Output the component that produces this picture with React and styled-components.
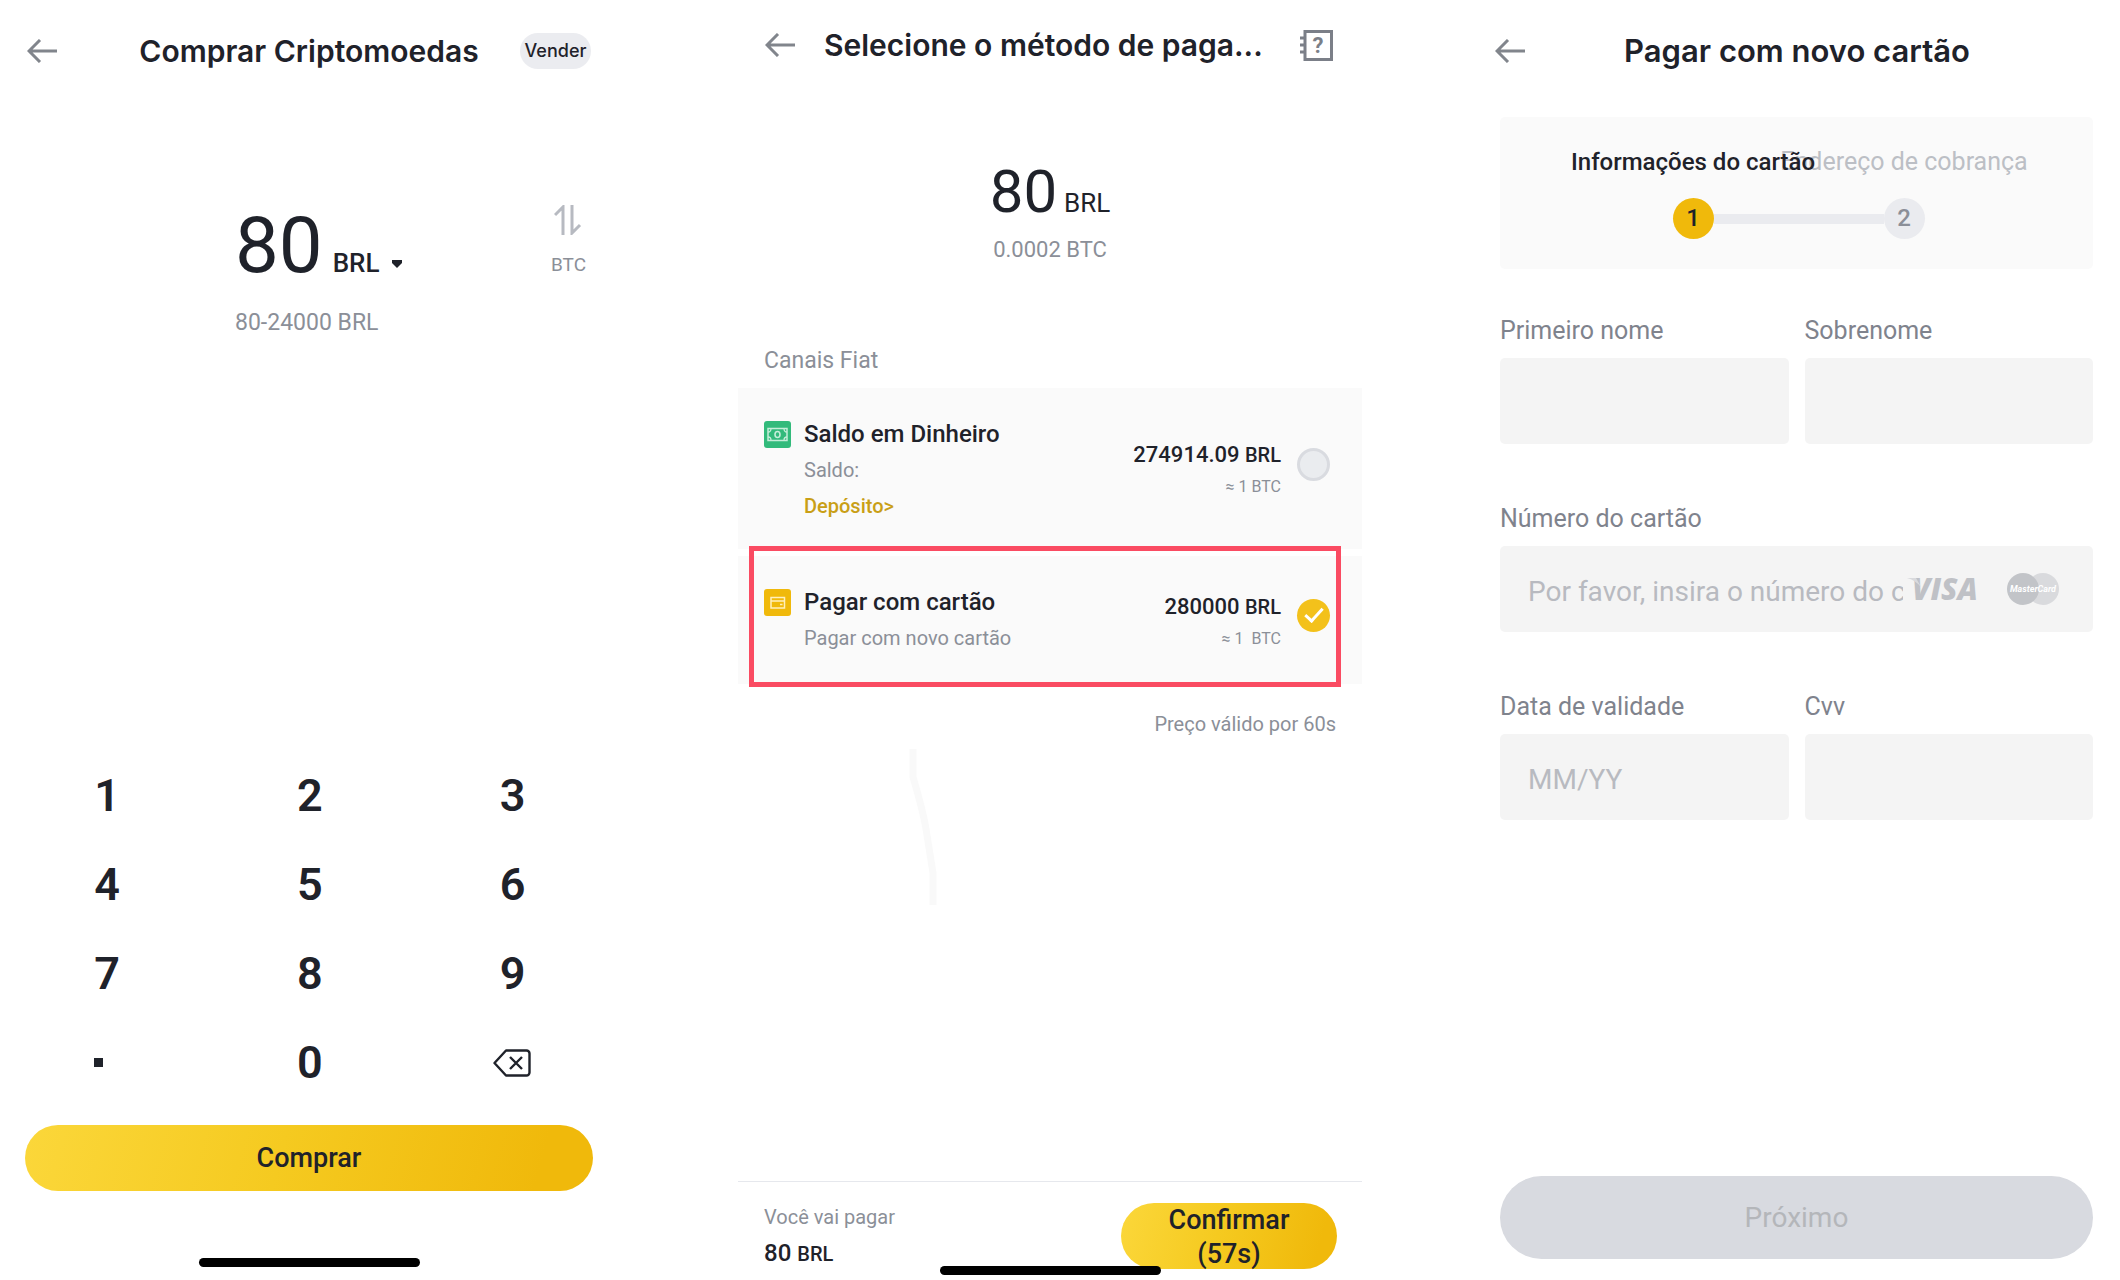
import React from 'react'
import styled, { createGlobalStyle, css } from 'styled-components'

const ink = '#1f222a'
const grey = '#8b8f98'
const gold = 'linear-gradient(105deg, #fbd73a 0%, #f5ca20 45%, #f0b90b 90%)'

const GlobalStyle = createGlobalStyle`
  *, *::before, *::after {
    box-sizing: border-box;
  }
  body {
    margin: 0;
    background: #fff;
    color: ${ink};
    font-family: Roboto, 'Open Sans', sans-serif;
  }
  button, input, select {
    border: 0;
    margin: 0;
    padding: 0;
    background: none;
    color: inherit;
    font: inherit;
  }
  button {
    cursor: pointer;
  }
  svg {
    display: block;
    flex: none;
  }
`

const Screens = styled.main`
  display: grid;
  grid-template-columns: 618fr 624fr 638fr;
  column-gap: 120px;
  min-height: 100vh;
`

const Screen = styled.section`
  position: relative;
  display: flex;
  flex-direction: column;
  min-width: 0;
`

const Header = styled.header`
  display: grid;
  grid-template-columns: 1fr auto 1fr;
  align-items: center;
  height: 101px;
  padding: 0 27px;
`

const CompactHeader = styled(Header)`
  grid-template-columns: auto 1fr auto;
  column-gap: 29px;
  height: 90px;
  padding: 0 29px 0 27px;
`

const FormHeader = styled(Header)`
  padding: 0 21px 0 13px;
`

const Title = styled.h1`
  margin: 0;
  font-family: Inter, sans-serif;
  font-size: ${({ $large }) => ($large ? 31 : 30)}px;
  font-weight: 600;
  line-height: 40px;
  white-space: nowrap;
`

const IconButton = styled.button`
  display: flex;
  justify-self: start;
`

const SellButton = styled.button`
  justify-self: end;
  width: 71px;
  height: 36px;
  border-radius: 18px;
  background: #ebecf0;
  font-family: Inter, sans-serif;
  font-size: 18px;
  font-weight: 500;
  text-align: center;
`

const Caption = styled.p`
  margin: 0;
  color: ${grey};
  font-size: ${({ $size }) => $size || 20}px;
  line-height: 28px;
`

/* buy screen */

const AmountArea = styled.div`
  display: flex;
  justify-content: space-between;
  padding: 104px 32px 0 235px;
`

const BuyAmount = styled.div`
  display: flex;
  align-items: baseline;
  gap: 10px;
  margin-bottom: 22px;
  font-size: 78px;
  line-height: 82px;
`

const CurrencyPicker = styled.label`
  display: flex;
  align-items: baseline;
  gap: 12px;
  font-size: 26px;
  font-weight: 500;
  line-height: 32px;

  select {
    appearance: none;
  }
`

const SwapButton = styled.button`
  display: flex;
  flex-direction: column;
  align-items: center;
  align-self: flex-start;
  gap: 18px;
  color: ${grey};
  font-size: 19px;
  line-height: 24px;
`

const Keypad = styled.div`
  display: grid;
  grid-template-columns: repeat(3, 1fr);
  grid-auto-rows: 89px;
  margin-top: auto;
  padding: 0 5px;
`

const Key = styled.button`
  display: flex;
  align-items: center;
  justify-content: center;
  font-size: 45px;
  font-weight: 600;
  line-height: 48px;
`

const Glyph = styled.span`
  width: 24px;
  text-align: center;
`

const Point = styled.span`
  display: block;
  width: 9px;
  height: 9px;
  background: ${ink};
`

const pill = css`
  border-radius: 42px;
  background: ${gold};
  font-size: 27px;
  font-weight: 500;
  line-height: 34px;
`

const BuyButton = styled.button`
  ${pill};
  height: 66px;
  margin: 18px 25px 67px;
`

const HomeBar = styled.div`
  align-self: center;
  width: 221px;
  height: 9px;
  margin-bottom: 13px;
  border-radius: 5px;
  background: #000;
`

const FloatingHomeBar = styled(HomeBar)`
  position: absolute;
  bottom: 5px;
  left: 50%;
  margin: 0 0 0 -110px;
`

/* payment method screen */

const Summary = styled.div`
  display: flex;
  flex-direction: column;
  align-items: center;
  gap: 12px;
  padding: 70px 0 83px;
`

const PayAmount = styled.div`
  display: flex;
  align-items: baseline;
  gap: 7px;
  font-size: 60px;
  line-height: 64px;

  small {
    font-size: 26px;
    line-height: 32px;
  }
`

const Channels = styled.fieldset`
  display: flex;
  flex-direction: column;
  gap: 7px;
  min-width: 0;
  margin: 0;
  padding: 0;
  border: 0;

  legend {
    margin-bottom: 13px;
    padding: 0 26px;
    color: ${grey};
    font-size: 23px;
    line-height: 28px;
  }
`

const Channel = styled.div`
  position: relative;
  display: flex;
  align-items: center;
  min-height: 128px;
  padding: 28px 32px 25px 26px;
  background: #fafafa;
`

const Highlight = styled.div`
  position: absolute;
  inset: -10px 21px -3px 11px;
  border: 5px solid #fa4b62;
  pointer-events: none;
`

const ChannelIcon = styled.div`
  display: flex;
  align-items: center;
  align-self: flex-start;
  height: 36px;
  margin-right: 13px;
`

const ChannelText = styled.div`
  display: flex;
  flex: 1;
  flex-direction: column;
  align-items: flex-start;
  align-self: flex-start;
  color: ${grey};
  font-size: 20px;
  line-height: 36px;

  label {
    color: ${ink};
    font-size: 24px;
    font-weight: 500;
  }
  a {
    color: #c99f16;
    font-weight: 500;
    text-decoration: none;
  }
`

const Price = styled.div`
  padding-top: 2px;
  color: ${grey};
  font-size: 16px;
  line-height: 32px;
  text-align: right;
  white-space: pre;
`

const Money = styled.strong`
  display: block;
  color: ${ink};
  font-size: ${({ $size }) => $size || 22}px;
  font-weight: 500;

  small {
    font-size: 20px;
  }
`

const Radio = styled.input`
  appearance: none;
  display: flex;
  align-items: center;
  justify-content: center;
  flex: none;
  width: 33px;
  height: 33px;
  margin: 0 0 12px 16px;
  border: 3px solid #d9dbe0;
  border-radius: 50%;
  background: #eaecef;

  &:checked {
    border: 0;
    background: #f3c11b;
  }
  &:checked::after {
    content: '';
    width: 10px;
    height: 18px;
    margin-bottom: 6px;
    border: solid #fff;
    border-width: 0 3px 3px 0;
    transform: rotate(42deg);
  }
`

const PriceNote = styled(Caption)`
  margin: 26px 26px 8px;
  text-align: right;
`

const Scratch = styled.svg`
  margin-left: 168px;
`

const PayBar = styled.footer`
  display: flex;
  align-items: center;
  justify-content: space-between;
  margin-top: auto;
  padding: 17px 25px 8px 26px;
  border-top: 1px solid #e6e8ed;
  color: ${grey};
  font-size: 20px;
  line-height: 36px;
`

const ConfirmButton = styled.button`
  ${pill};
  width: 216px;
  height: 66px;
  padding: 0 40px;
  color: ${ink};
`

/* new card screen */

const CardForm = styled.form`
  display: flex;
  flex: 1;
  flex-direction: column;
  padding: 16px 27px 21px 18px;
`

const Steps = styled.div`
  display: flex;
  flex-direction: column;
  gap: 22px;
  margin-bottom: 46px;
  padding: 31px 0 30px 4px;
  border-radius: 5px;
  background: #fafafa;
`

const StepLabels = styled.div`
  display: grid;
  grid-template-columns: 211px 211px;
  justify-content: center;
`

const StepLabel = styled.span`
  display: flex;
  justify-content: center;
  z-index: ${({ $active }) => ($active ? 1 : 0)};
  color: ${({ $active }) => ($active ? ink : '#bcbfc5')};
  font-size: ${({ $active }) => ($active ? 24 : 25)}px;
  font-weight: ${({ $active }) => ($active ? 500 : 400)};
  line-height: 28px;
  white-space: nowrap;
`

const StepTrack = styled.div`
  display: flex;
  align-items: center;
  justify-content: center;
`

const StepDot = styled.span`
  width: 41px;
  height: 41px;
  border-radius: 50%;
  background: ${({ $active }) => ($active ? '#f0b90b' : '#eaebef')};
  color: ${({ $active }) => ($active ? ink : grey)};
  font-size: 24px;
  font-weight: 500;
  line-height: 41px;
  text-align: center;
`

const StepLine = styled.span`
  width: 170px;
  height: 10px;
  background: #eaebef;
`

const FieldGrid = styled.div`
  display: grid;
  grid-template-columns: 1fr 1fr;
  gap: 59px 16px;
`

const Field = styled.div`
  grid-column: ${({ $wide }) => ($wide ? '1 / -1' : 'auto')};
  min-width: 0;

  label {
    display: block;
    margin-bottom: 11px;
    color: #7f838d;
    font-size: 25px;
    line-height: 32px;
  }
`

const FieldBox = styled.div`
  display: flex;
  align-items: center;
  height: 86px;
  padding: 0 34px 0 28px;
  border-radius: 5px;
  background: #f4f4f4;

  input {
    flex: 1;
    min-width: 0;
    height: 100%;
    padding-top: 4px;
    outline: none;
    font-size: 28px;
  }
  input::placeholder {
    color: #b8bac0;
    opacity: 1;
  }
`

const NextButton = styled.button`
  ${pill};
  height: 83px;
  margin-top: auto;
  background: #d8dae0;
  color: #b4b6ba;
  font-size: 28px;
  font-weight: 400;
`

const CardBrands = styled.div`
  display: flex;
  align-items: center;
  gap: 24px;
  margin-left: 4px;
`

const ArrowLeft = () => (
  <svg width="30" height="24" viewBox="0 0 30 24" fill="none" stroke="#81858c" strokeWidth="3">
    <path d="M13 1 2 12l11 11M2 12h28" />
  </svg>
)

const HelpBook = () => (
  <svg width="33" height="31" viewBox="0 0 33 31" fill="none" stroke="#7b7f88" strokeWidth="3">
    <path d="M5 1.5h26.5v28H5z" />
    <path d="M0 8h5M0 15h5M0 22h5" />
    <text x="18" y="23" textAnchor="middle" fontSize="22" fontWeight="700" fill="#7b7f88" stroke="none">?</text>
  </svg>
)

const Swap = () => (
  <svg width="28" height="30" viewBox="0 0 28 30" fill="none" stroke="#b7bac1" strokeWidth="3">
    <path d="M1 10 9 2v28M18 0v28l8-8" />
  </svg>
)

const Backspace = () => (
  <svg width="38" height="28" viewBox="0 0 38 28" fill="none" stroke={ink} strokeWidth="2.4" strokeLinejoin="round">
    <path d="M13 1.5h20.5a3 3 0 0 1 3 3v19a3 3 0 0 1-3 3H13L1.5 14z" />
    <path d="m17 8 12 12M29 8 17 20" />
  </svg>
)

const Cash = () => (
  <svg width="27" height="27" viewBox="0 0 27 27">
    <rect width="27" height="27" rx="3" fill="#32ba7b" />
    <path d="M4 7.5h19v12H4z" fill="none" stroke="#c5edd9" strokeWidth="1.5" />
    <path
      d="M4 11q3 0 3-3.500M23 11q-3 0-3-3.500M4 16q3 0 3 3.500M23 16q-3 0-3 3.500"
      fill="none"
      stroke="#c5edd9"
      strokeWidth="1.3"
    />
    <ellipse cx="13.5" cy="13.5" rx="2.5" ry="3" fill="none" stroke="#c5edd9" strokeWidth="1.6" />
  </svg>
)

const Card = () => (
  <svg width="27" height="27" viewBox="0 0 27 27">
    <rect width="27" height="27" rx="3" fill="#f0b90b" />
    <path d="M7 8.500h13.500v10.500H7zM7 12h13.500M16 15.500h2.500" fill="none" stroke="#fff0bd" strokeWidth="1.5" />
  </svg>
)

const Visa = () => (
  <svg width="76" height="34" viewBox="0 0 76 34" aria-label="Visa">
    <text x="5" y="28" fontFamily="Open Sans" fontSize="30" fontWeight="800" fontStyle="italic" fill="#bfc1c6">VISA</text>
    <path d="M0 6h9l5 9Q8 8 0 6z" fill="#d9dadd" />
  </svg>
)

const MasterCard = () => (
  <svg width="52" height="32" viewBox="0 0 52 32" aria-label="MasterCard">
    <circle cx="36" cy="16" r="16" fill="#d9dadd" />
    <circle cx="16" cy="16" r="16" fill="#c2c4c8" />
    <text x="26" y="19" textAnchor="middle" fontSize="9" fontWeight="700" fontStyle="italic" fill="#fff">MasterCard</text>
  </svg>
)

const BuyScreen = () => (
  <Screen>
    <Header>
      <IconButton aria-label="Voltar"><ArrowLeft /></IconButton>
      <Title>Comprar Criptomoedas</Title>
      <SellButton>Vender</SellButton>
    </Header>
    <AmountArea>
      <div>
        <BuyAmount>
          80
          <CurrencyPicker>
            <select aria-label="Moeda" defaultValue="BRL">
              <option>BRL</option>
            </select>
            <svg width="10" height="12" viewBox="0 0 10 12">
              <path d="M0 0h10v3L5 8 0 3z" fill={ink} />
            </svg>
          </CurrencyPicker>
        </BuyAmount>
        <Caption $size={23}>80-24000 BRL</Caption>
      </div>
      <SwapButton>
        <Swap />
        BTC
      </SwapButton>
    </AmountArea>
    <Keypad>
      {[1, 2, 3, 4, 5, 6, 7, 8, 9].map(n => (
        <Key key={n}><Glyph>{n}</Glyph></Key>
      ))}
      <Key aria-label="Ponto decimal"><Glyph><Point /></Glyph></Key>
      <Key><Glyph>0</Glyph></Key>
      <Key aria-label="Apagar"><Backspace /></Key>
    </Keypad>
    <BuyButton>Comprar</BuyButton>
    <HomeBar />
  </Screen>
)

const MethodScreen = () => (
  <Screen>
    <CompactHeader>
      <IconButton aria-label="Voltar"><ArrowLeft /></IconButton>
      <Title>Selecione o método de paga...</Title>
      <IconButton aria-label="Ajuda"><HelpBook /></IconButton>
    </CompactHeader>
    <Summary>
      <PayAmount>80<small>BRL</small></PayAmount>
      <Caption $size={22}>0.0002 BTC</Caption>
    </Summary>
    <Channels>
      <legend>Canais Fiat</legend>
      <Channel>
        <ChannelIcon><Cash /></ChannelIcon>
        <ChannelText>
          <label htmlFor="cash">Saldo em Dinheiro</label>
          <span>Saldo:</span>
          <a href="#deposito">Depósito&gt;</a>
        </ChannelText>
        <Price>
          <Money>274914.09 <small>BRL</small></Money>
          ≈ 1 BTC
        </Price>
        <Radio type="radio" name="channel" id="cash" />
      </Channel>
      <Channel>
        <ChannelIcon><Card /></ChannelIcon>
        <ChannelText>
          <label htmlFor="card">Pagar com cartão</label>
          <span>Pagar com novo cartão</span>
        </ChannelText>
        <Price>
          <Money>280000 <small>BRL</small></Money>
          {'≈ 1  BTC'}
        </Price>
        <Radio type="radio" name="channel" id="card" defaultChecked />
        <Highlight />
      </Channel>
    </Channels>
    <PriceNote>Preço válido por 60s</PriceNote>
    <Scratch width="36" height="162" viewBox="0 0 36 162" fill="none" stroke="#f9f9f9" strokeWidth="7">
      <path d="M7 3v28q10 34 13 52l7 44v32" />
    </Scratch>
    <PayBar>
      <div>
        Você vai pagar
        <Money $size={24}>80 <small>BRL</small></Money>
      </div>
      <ConfirmButton>Confirmar (57s)</ConfirmButton>
    </PayBar>
    <FloatingHomeBar />
  </Screen>
)

const NewCardScreen = () => (
  <Screen>
    <FormHeader>
      <IconButton aria-label="Voltar"><ArrowLeft /></IconButton>
      <Title $large>Pagar com novo cartão</Title>
    </FormHeader>
    <CardForm>
      <Steps>
        <StepLabels>
          <StepLabel $active>Informações do cartão</StepLabel>
          <StepLabel>Endereço de cobrança</StepLabel>
        </StepLabels>
        <StepTrack>
          <StepDot $active>1</StepDot>
          <StepLine />
          <StepDot>2</StepDot>
        </StepTrack>
      </Steps>
      <FieldGrid>
        <Field>
          <label htmlFor="first-name">Primeiro nome</label>
          <FieldBox><input id="first-name" /></FieldBox>
        </Field>
        <Field>
          <label htmlFor="last-name">Sobrenome</label>
          <FieldBox><input id="last-name" /></FieldBox>
        </Field>
        <Field $wide>
          <label htmlFor="number">Número do cartão</label>
          <FieldBox>
            <input id="number" placeholder="Por favor, insira o número do cartão" />
            <CardBrands>
              <Visa />
              <MasterCard />
            </CardBrands>
          </FieldBox>
        </Field>
        <Field>
          <label htmlFor="expiry">Data de validade</label>
          <FieldBox><input id="expiry" placeholder="MM/YY" /></FieldBox>
        </Field>
        <Field>
          <label htmlFor="cvv">Cvv</label>
          <FieldBox><input id="cvv" /></FieldBox>
        </Field>
      </FieldGrid>
      <NextButton type="button">Próximo</NextButton>
    </CardForm>
  </Screen>
)

const App = () => (
  <>
    <GlobalStyle />
    <Screens>
      <BuyScreen />
      <MethodScreen />
      <NewCardScreen />
    </Screens>
  </>
)

export default App
